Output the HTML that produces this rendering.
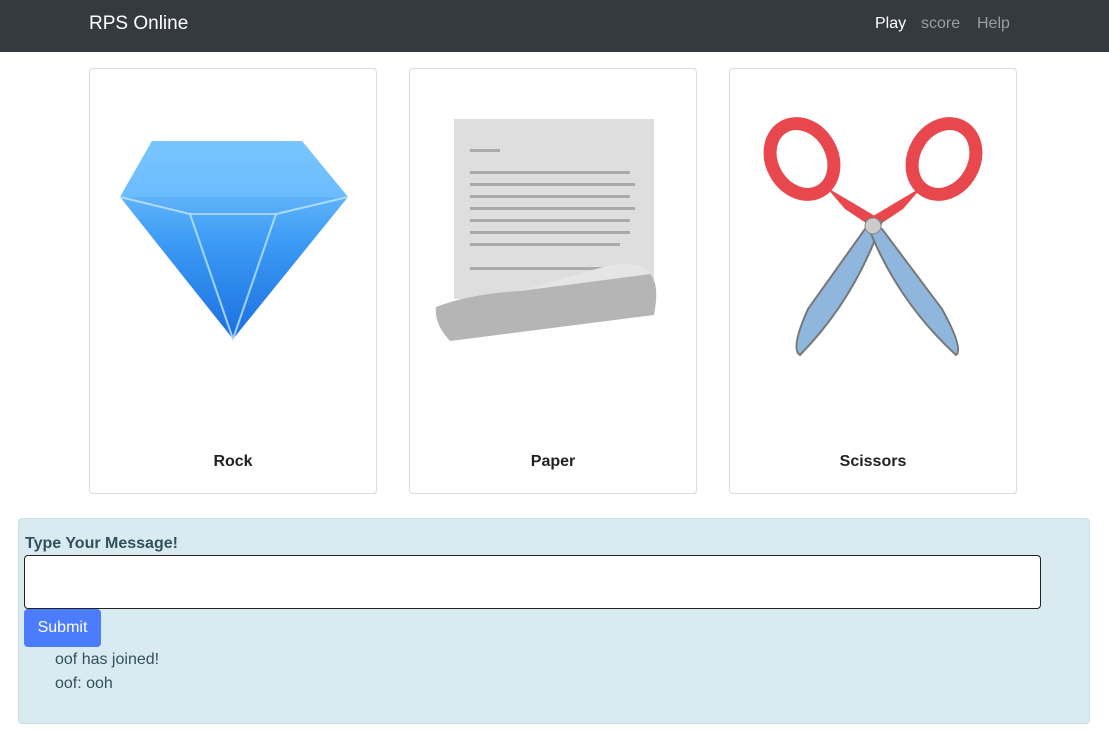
<!DOCTYPE html>
<html><head><meta charset="utf-8"><style>
*{box-sizing:border-box;margin:0;padding:0}
body{width:1109px;height:742px;background:#fff;font-family:"Liberation Sans",sans-serif;position:relative;overflow:hidden}
.nav{position:absolute;left:0;top:0;width:1109px;height:52px;background:#343a40}
.brand{position:absolute;left:89px;top:13px;color:#fff;font-size:19px}
.nl{position:absolute;top:15px;font-size:16px;color:#9a9da0}
.card{position:absolute;top:68px;width:288px;height:426px;border:1px solid #dcdcdc;border-radius:4px}
.card .t{position:absolute;left:0;right:0;top:384px;text-align:center;font-weight:bold;font-size:16px;color:#222}
.card svg{position:absolute;left:0;top:0}
.panel{position:absolute;left:18px;top:518px;width:1072px;height:206px;background:#d9eaf0;border:1px solid #c9e1e8;border-radius:4px;color:#2f525c}
.lbl{position:absolute;left:6px;top:16px;font-weight:bold;font-size:16px}
.inp{position:absolute;left:5px;top:36px;width:1017px;height:54px;background:#fff;border:1px solid #222;border-radius:4px}
.btn{position:absolute;left:5px;top:90px;width:77px;height:38px;background:#4a7cfd;color:#fff;border-radius:4px;font-size:16px;text-align:center;line-height:38px}
.m{position:absolute;left:36px;font-size:16px}
</style></head><body>
<div class="nav"><div class="brand">RPS Online</div>
<div class="nl" style="left:875px;color:#fff">Play</div>
<div class="nl" style="left:921px">score</div>
<div class="nl" style="left:977px">Help</div></div>

<div class="card" style="left:89px"><svg width="288" height="400">
<defs><linearGradient id="g1" x1="0" y1="0" x2="0" y2="1"><stop offset="0" stop-color="#8fd0ff"/><stop offset=".5" stop-color="#3d9cf5"/><stop offset="1" stop-color="#1b6fe0"/></linearGradient></defs>
<polygon points="62,72 212,72 258,128 143,270 30,128" fill="url(#g1)"/>
<polygon points="62,72 212,72 258,128 30,128" fill="#6fc0ff" opacity=".7"/>
<polyline points="30,128 100,145 143,270 186,145 258,128" fill="none" stroke="#bfe6ff" stroke-width="2" opacity=".8"/>
<line x1="100" y1="145" x2="186" y2="145" stroke="#bfe6ff" stroke-width="2" opacity=".7"/>
</svg><div class="t">Rock</div></div>

<div class="card" style="left:409px"><svg width="288" height="400">
<rect x="44" y="50" width="200" height="180" fill="#dedede"/>
<g fill="#aaa"><rect x="60" y="80" width="30" height="3"/>
<rect x="60" y="102" width="160" height="3"/><rect x="60" y="114" width="165" height="3"/><rect x="60" y="126" width="160" height="3"/><rect x="60" y="138" width="165" height="3"/><rect x="60" y="150" width="160" height="3"/><rect x="60" y="162" width="160" height="3"/><rect x="60" y="174" width="150" height="3"/><rect x="60" y="198" width="160" height="3"/></g>
<path d="M26 238 Q60 225 110 222 L240 205 Q250 215 244 246 L40 272 Q24 255 26 238Z" fill="#b5b5b5"/>
<path d="M200 196 Q235 192 240 205 L110 222 Z" fill="#e5e5e5"/>
</svg><div class="t">Paper</div></div>

<div class="card" style="left:729px"><svg width="288" height="400">
<g fill="none" stroke="#e8474d" stroke-width="13">
<ellipse cx="72" cy="90" rx="30" ry="37" transform="rotate(-30 72 90)"/>
<ellipse cx="214" cy="90" rx="30" ry="37" transform="rotate(30 214 90)"/></g>
<path d="M96 118 L115 140 L145 160 L150 150 Z" fill="#e8474d"/>
<path d="M192 118 L173 140 L143 160 L138 150 Z" fill="#e8474d"/>
<path d="M135 160 L152 152 Q125 230 70 286 Q60 280 78 240 Z" fill="#8fb7de" stroke="#777" stroke-width="2"/>
<path d="M152 160 L136 152 Q165 230 226 286 Q234 280 212 240 Z" fill="#8fb7de" stroke="#777" stroke-width="2"/>
<circle cx="143" cy="157" r="8" fill="#ccc" stroke="#888"/>
</svg><div class="t">Scissors</div></div>

<div class="panel"><div class="lbl">Type Your Message!</div><div class="inp"></div><div class="btn">Submit</div>
<div class="m" style="top:132px">oof has joined!</div><div class="m" style="top:156px">oof: ooh</div></div>
</body></html>
